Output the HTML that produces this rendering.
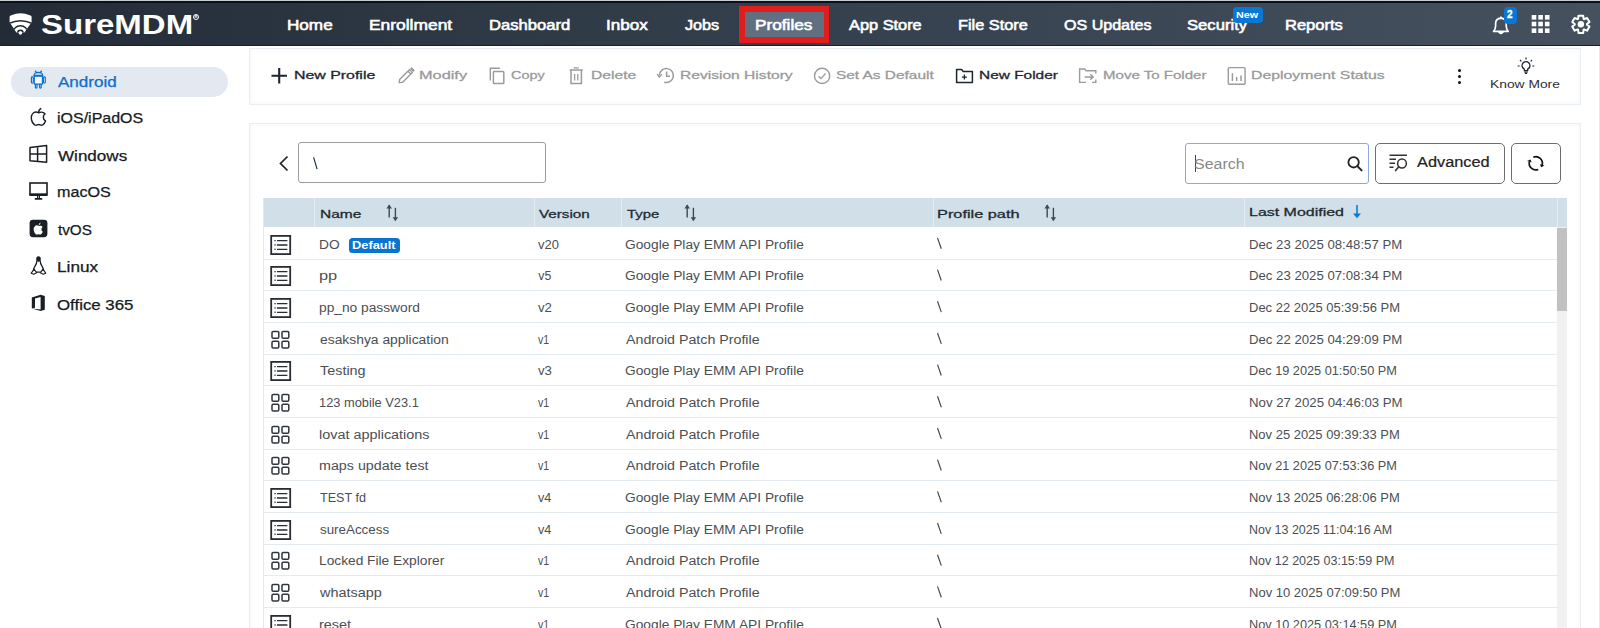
<!DOCTYPE html>
<html><head><meta charset="utf-8"><style>
html,body{margin:0;padding:0;width:1600px;height:628px;overflow:hidden;background:#fff;position:relative;font-family:'Liberation Sans', sans-serif}
.t{position:absolute;white-space:nowrap;line-height:20px;font-family:'Liberation Sans', sans-serif;transform-origin:0 0}
.a{position:absolute}
svg{position:absolute;overflow:visible}
</style></head><body>
<!-- header -->
<div class="a" style="left:0;top:0;width:1600px;height:46px;background:linear-gradient(90deg,#232b36 0%,#29333f 15%,#34404d 50%,#3e4a58 80%,#45515f 100%)"></div>
<div class="a" style="left:0;top:0;width:1600px;height:1px;background:#c9ccd0"></div>
<div class="a" style="left:0;top:1px;width:1600px;height:1.5px;background:#07121c"></div>
<div class="a" style="left:0;top:45px;width:1600px;height:1px;background:#15222e"></div>
<svg style="left:0;top:0" width="40" height="46" viewBox="0 0 40 46">
  <defs><clipPath id="lg"><path d="M9.6,16.4 Q10,15.6 11.4,15.2 Q20.6,11.4 29.8,15.2 Q31.2,15.6 31.6,16.4 L31.6,22.2 L24.4,32.4 L16.4,32.4 L9.6,22.2 Z"/></clipPath></defs>
  <g clip-path="url(#lg)">
    <rect x="0" y="0" width="40" height="46" fill="#fff"/>
    <path d="M8,23.9 Q20.6,17.6 33.2,23.9" stroke="#232b36" stroke-width="1.5" fill="none"/>
    <circle cx="20.4" cy="33.0" r="7.3" stroke="#232b36" stroke-width="1.5" fill="none"/>
    <circle cx="20.4" cy="33.0" r="2.6" stroke="#232b36" stroke-width="1.7" fill="#fff"/>
  </g>
  <circle cx="20.4" cy="33.0" r="1.7" fill="#fff"/>
</svg>
<div class="a" style="left:193px;top:14px;width:6px;height:6px;border-radius:50%;border:1px solid #fff;box-sizing:border-box;font-size:4px;color:#fff;line-height:4px;text-align:center;font-family:'Liberation Sans';font-weight:700">R</div>
<div class="a" style="left:739px;top:6px;width:90px;height:36.5px;background:#e11d1d"></div>
<div class="a" style="left:745px;top:12px;width:79px;height:25px;background:#607080"></div>
<div class="a" style="left:1233px;top:7px;width:30px;height:16px;background:#0a77d5;border-radius:4px;z-index:5"></div>
<!-- bell -->
<svg style="left:1488px;top:12px" width="26" height="26" viewBox="0 0 26 26">
  <path d="M5.6,19.4 Q7.4,17.6 7.6,14 L7.6,11.2 Q7.8,6.6 12.9,6.2 Q18,6.6 18.2,11.2 L18.2,14 Q18.4,17.6 20.2,19.4 Z" stroke="#fff" stroke-width="1.7" fill="none" stroke-linejoin="round"/>
  <path d="M12.9,4.4 L12.9,6.2" stroke="#fff" stroke-width="1.6"/>
  <path d="M11.2,20.6 Q12.9,22.6 14.6,20.6 Z" stroke="#fff" stroke-width="1.4" fill="#fff"/>
</svg>
<div class="a" style="left:1504px;top:7px;width:12.5px;height:16.5px;background:#0a77d5;border-radius:4px"></div>
<!-- grid -->
<svg style="left:1531px;top:15px" width="20" height="20" viewBox="0 0 20 20">
  <g fill="#fff">
  <rect x="0.7" y="0" width="4.6" height="4.6"/><rect x="7.3" y="0" width="4.6" height="4.6"/><rect x="13.9" y="0" width="4.6" height="4.6"/>
  <rect x="0.7" y="6.7" width="4.6" height="4.6"/><rect x="7.3" y="6.7" width="4.6" height="4.6"/><rect x="13.9" y="6.7" width="4.6" height="4.6"/>
  <rect x="0.7" y="13.4" width="4.6" height="4.6"/><rect x="7.3" y="13.4" width="4.6" height="4.6"/><rect x="13.9" y="13.4" width="4.6" height="4.6"/>
  </g>
</svg>
<!-- gear -->
<svg style="left:1568px;top:11px" width="26" height="26" viewBox="0 0 26 26">
  <g transform="translate(12.85,13.3)">
  <path d="M-2.76,-5.44 L-2.37,-8.58 L2.37,-8.58 L2.76,-5.44 L3.33,-5.11 L6.24,-6.34 L8.62,-2.23 L6.09,-0.33 L6.09,0.33 L8.62,2.23 L6.24,6.34 L3.33,5.11 L2.76,5.44 L2.37,8.58 L-2.37,8.58 L-2.76,5.44 L-3.33,5.11 L-6.24,6.34 L-8.62,2.23 L-6.09,0.33 L-6.09,-0.33 L-8.62,-2.23 L-6.24,-6.34 L-3.33,-5.11 Z" stroke="#fff" stroke-width="2" fill="none" stroke-linejoin="round"/><circle r="3.2" fill="#fff"/>
  </g>
</svg>
<!-- sidebar -->
<div class="a" style="left:11px;top:66.5px;width:217px;height:30.5px;background:#e2e9f0;border-radius:16px"></div>
<!-- cards -->
<div class="a" style="left:249px;top:48px;width:1330px;height:54.5px;border:1px solid #e9eef2;background:#fff;box-shadow:inset 0 0 5px rgba(40,60,80,0.05)"></div>
<div class="a" style="left:249px;top:123px;width:1330px;height:520px;border:1px solid #e9eef2;background:#fff;box-shadow:inset 0 0 5px rgba(40,60,80,0.05)"></div>
<div class="a" style="left:1598.5px;top:46px;width:1px;height:582px;background:#e6ebf0"></div>
<!-- path input -->
<div class="a" style="left:298px;top:142px;width:248px;height:41px;border:1px solid #9c9c9c;border-radius:3px;box-sizing:border-box"></div>
<svg style="left:276px;top:153px" width="16" height="22" viewBox="0 0 16 22">
  <path d="M11.5,3.5 L4.5,10.5 L11.5,17.5" stroke="#222" stroke-width="1.7" fill="none"/>
</svg>
<!-- search -->
<div class="a" style="left:1185px;top:142.5px;width:184px;height:41px;border:1px solid #8aaadf;border-radius:3px;box-sizing:border-box"></div>
<div class="a" style="left:1195px;top:155px;width:1px;height:17px;background:#444"></div>
<svg style="left:1345px;top:154px" width="20" height="20" viewBox="0 0 20 20">
  <circle cx="8.6" cy="8.3" r="5.2" stroke="#222" stroke-width="1.8" fill="none"/>
  <path d="M12.4,12.1 L16.6,16.4" stroke="#222" stroke-width="2" stroke-linecap="round"/>
</svg>
<div class="a" style="left:1375px;top:143px;width:130px;height:40.5px;border:1px solid #6d6d6d;border-radius:5px;box-sizing:border-box"></div>
<svg style="left:1387px;top:152px" width="24" height="22" viewBox="0 0 24 22">
  <path d="M2.5,3.2 L20,3.2 M2.5,7.2 L9,7.2 M2.5,11.2 L8,11.2 M2.5,15.2 L6.5,15.2" stroke="#333" stroke-width="1.4"/>
  <circle cx="15" cy="11.5" r="4.4" stroke="#333" stroke-width="1.5" fill="#fff"/>
  <path d="M11.8,14.8 L8.6,18.6" stroke="#333" stroke-width="1.6" stroke-linecap="round"/>
</svg>
<div class="a" style="left:1511px;top:142.5px;width:50px;height:41px;border:1px solid #6d6d6d;border-radius:5px;box-sizing:border-box"></div>
<svg style="left:1524px;top:152px" width="24" height="24" viewBox="0 0 24 24">
  <path d="M9.33,5.18 A6.6,6.6 0 0 1 18.14,13.12" stroke="#111" stroke-width="1.7" fill="none"/>
  <path d="M14.27,17.42 A6.6,6.6 0 0 1 5.46,9.48" stroke="#111" stroke-width="1.7" fill="none"/>
  <path d="M20.53,13.48 L15.88,12.32 L17.14,15.18 Z" fill="#111"/>
  <path d="M3.07,9.12 L7.72,10.28 L6.46,7.42 Z" fill="#111"/>
</svg>
<!-- table header -->
<div class="a" style="left:264px;top:198px;width:1302.5px;height:29px;background:#d1dfe8"></div>
<div class="a" style="left:314px;top:198px;width:1px;height:29px;background:#e4ecf1"></div>
<div class="a" style="left:534px;top:198px;width:1px;height:29px;background:#e4ecf1"></div>
<div class="a" style="left:621px;top:198px;width:1px;height:29px;background:#e4ecf1"></div>
<div class="a" style="left:933px;top:198px;width:1px;height:29px;background:#e4ecf1"></div>
<div class="a" style="left:1244px;top:198px;width:1px;height:29px;background:#e4ecf1"></div>
<div class="a" style="left:1556.5px;top:198px;width:1px;height:29px;background:#e4ecf1"></div>
<div class="a" style="left:263px;top:198px;width:1px;height:430px;background:#e3e9ee"></div>
<!-- scrollbar -->
<div class="a" style="left:1557px;top:227px;width:9.5px;height:401px;background:#f1f1f1"></div>
<div class="a" style="left:1557px;top:228px;width:9.5px;height:83px;background:#c1c1c1"></div>
<svg style="left:385.5px;top:203.6px" width="14" height="18" viewBox="0 0 14 18">
  <path d="M3.2,1 L3.2,13.4" stroke="#3b4b58" stroke-width="1.4"/><path d="M0.4,4.4 L3.2,0.6 L6,4.4 Z" fill="#3b4b58"/>
  <path d="M9.4,3.8 L9.4,16.6" stroke="#3b4b58" stroke-width="1.4"/><path d="M6.6,13.2 L9.4,17 L12.2,13.2 Z" fill="#3b4b58"/>
</svg>
<svg style="left:684px;top:203.6px" width="14" height="18" viewBox="0 0 14 18">
  <path d="M3.2,1 L3.2,13.4" stroke="#3b4b58" stroke-width="1.4"/><path d="M0.4,4.4 L3.2,0.6 L6,4.4 Z" fill="#3b4b58"/>
  <path d="M9.4,3.8 L9.4,16.6" stroke="#3b4b58" stroke-width="1.4"/><path d="M6.6,13.2 L9.4,17 L12.2,13.2 Z" fill="#3b4b58"/>
</svg>
<svg style="left:1044.4px;top:203.6px" width="14" height="18" viewBox="0 0 14 18">
  <path d="M3.2,1 L3.2,13.4" stroke="#3b4b58" stroke-width="1.4"/><path d="M0.4,4.4 L3.2,0.6 L6,4.4 Z" fill="#3b4b58"/>
  <path d="M9.4,3.8 L9.4,16.6" stroke="#3b4b58" stroke-width="1.4"/><path d="M6.6,13.2 L9.4,17 L12.2,13.2 Z" fill="#3b4b58"/>
</svg>
<svg style="left:1351px;top:204px" width="12" height="16" viewBox="0 0 12 16">
  <path d="M6,1 L6,12" stroke="#0e7ad6" stroke-width="1.6"/><path d="M2,9.6 L6,14.2 L10,9.6 Z" fill="#0e7ad6"/></svg>
<div class="a" style="left:264px;top:259px;width:1293px;height:1px;background:#e4ebf1"></div>
<div class="a" style="left:264px;top:290px;width:1293px;height:1px;background:#e4ebf1"></div>
<div class="a" style="left:264px;top:322px;width:1293px;height:1px;background:#e4ebf1"></div>
<div class="a" style="left:264px;top:354px;width:1293px;height:1px;background:#e4ebf1"></div>
<div class="a" style="left:264px;top:385px;width:1293px;height:1px;background:#e4ebf1"></div>
<div class="a" style="left:264px;top:417px;width:1293px;height:1px;background:#e4ebf1"></div>
<div class="a" style="left:264px;top:449px;width:1293px;height:1px;background:#e4ebf1"></div>
<div class="a" style="left:264px;top:480px;width:1293px;height:1px;background:#e4ebf1"></div>
<div class="a" style="left:264px;top:512px;width:1293px;height:1px;background:#e4ebf1"></div>
<div class="a" style="left:264px;top:544px;width:1293px;height:1px;background:#e4ebf1"></div>
<div class="a" style="left:264px;top:575px;width:1293px;height:1px;background:#e4ebf1"></div>
<div class="a" style="left:264px;top:607px;width:1293px;height:1px;background:#e4ebf1"></div>
<div class="a" style="left:264px;top:639px;width:1293px;height:1px;background:#e4ebf1"></div>
<svg style="left:269px;top:233.60px" width="24" height="22" viewBox="0 0 24 22">
  <rect x="2.2" y="1.9" width="19" height="18.2" stroke="#272d33" stroke-width="1.8" fill="#fff"/>
  <g fill="#272d33"><rect x="5.4" y="6" width="1.3" height="1.3"/><rect x="5.4" y="10.3" width="1.3" height="1.3"/><rect x="5.4" y="14.6" width="1.3" height="1.3"/></g>
  <path d="M8,6.7 L18.4,6.7 M8,11 L18.4,11 M8,15.3 L18.4,15.3" stroke="#272d33" stroke-width="1.3"/>
</svg>
<svg style="left:269px;top:265.28px" width="24" height="22" viewBox="0 0 24 22">
  <rect x="2.2" y="1.9" width="19" height="18.2" stroke="#272d33" stroke-width="1.8" fill="#fff"/>
  <g fill="#272d33"><rect x="5.4" y="6" width="1.3" height="1.3"/><rect x="5.4" y="10.3" width="1.3" height="1.3"/><rect x="5.4" y="14.6" width="1.3" height="1.3"/></g>
  <path d="M8,6.7 L18.4,6.7 M8,11 L18.4,11 M8,15.3 L18.4,15.3" stroke="#272d33" stroke-width="1.3"/>
</svg>
<svg style="left:269px;top:296.96px" width="24" height="22" viewBox="0 0 24 22">
  <rect x="2.2" y="1.9" width="19" height="18.2" stroke="#272d33" stroke-width="1.8" fill="#fff"/>
  <g fill="#272d33"><rect x="5.4" y="6" width="1.3" height="1.3"/><rect x="5.4" y="10.3" width="1.3" height="1.3"/><rect x="5.4" y="14.6" width="1.3" height="1.3"/></g>
  <path d="M8,6.7 L18.4,6.7 M8,11 L18.4,11 M8,15.3 L18.4,15.3" stroke="#272d33" stroke-width="1.3"/>
</svg>
<svg style="left:269px;top:328.64px" width="24" height="22" viewBox="0 0 24 22">
  <g stroke="#30363c" stroke-width="1.5" fill="none">
  <rect x="3" y="2.4" width="6.8" height="6.8" rx="1.2"/><rect x="13" y="2.4" width="6.8" height="6.8" rx="1.2"/>
  <rect x="3" y="12.2" width="6.8" height="6.8" rx="1.2"/><rect x="13" y="12.2" width="6.8" height="6.8" rx="1.2"/>
  </g></svg>
<svg style="left:269px;top:360.32px" width="24" height="22" viewBox="0 0 24 22">
  <rect x="2.2" y="1.9" width="19" height="18.2" stroke="#272d33" stroke-width="1.8" fill="#fff"/>
  <g fill="#272d33"><rect x="5.4" y="6" width="1.3" height="1.3"/><rect x="5.4" y="10.3" width="1.3" height="1.3"/><rect x="5.4" y="14.6" width="1.3" height="1.3"/></g>
  <path d="M8,6.7 L18.4,6.7 M8,11 L18.4,11 M8,15.3 L18.4,15.3" stroke="#272d33" stroke-width="1.3"/>
</svg>
<svg style="left:269px;top:392.00px" width="24" height="22" viewBox="0 0 24 22">
  <g stroke="#30363c" stroke-width="1.5" fill="none">
  <rect x="3" y="2.4" width="6.8" height="6.8" rx="1.2"/><rect x="13" y="2.4" width="6.8" height="6.8" rx="1.2"/>
  <rect x="3" y="12.2" width="6.8" height="6.8" rx="1.2"/><rect x="13" y="12.2" width="6.8" height="6.8" rx="1.2"/>
  </g></svg>
<svg style="left:269px;top:423.68px" width="24" height="22" viewBox="0 0 24 22">
  <g stroke="#30363c" stroke-width="1.5" fill="none">
  <rect x="3" y="2.4" width="6.8" height="6.8" rx="1.2"/><rect x="13" y="2.4" width="6.8" height="6.8" rx="1.2"/>
  <rect x="3" y="12.2" width="6.8" height="6.8" rx="1.2"/><rect x="13" y="12.2" width="6.8" height="6.8" rx="1.2"/>
  </g></svg>
<svg style="left:269px;top:455.36px" width="24" height="22" viewBox="0 0 24 22">
  <g stroke="#30363c" stroke-width="1.5" fill="none">
  <rect x="3" y="2.4" width="6.8" height="6.8" rx="1.2"/><rect x="13" y="2.4" width="6.8" height="6.8" rx="1.2"/>
  <rect x="3" y="12.2" width="6.8" height="6.8" rx="1.2"/><rect x="13" y="12.2" width="6.8" height="6.8" rx="1.2"/>
  </g></svg>
<svg style="left:269px;top:487.04px" width="24" height="22" viewBox="0 0 24 22">
  <rect x="2.2" y="1.9" width="19" height="18.2" stroke="#272d33" stroke-width="1.8" fill="#fff"/>
  <g fill="#272d33"><rect x="5.4" y="6" width="1.3" height="1.3"/><rect x="5.4" y="10.3" width="1.3" height="1.3"/><rect x="5.4" y="14.6" width="1.3" height="1.3"/></g>
  <path d="M8,6.7 L18.4,6.7 M8,11 L18.4,11 M8,15.3 L18.4,15.3" stroke="#272d33" stroke-width="1.3"/>
</svg>
<svg style="left:269px;top:518.72px" width="24" height="22" viewBox="0 0 24 22">
  <rect x="2.2" y="1.9" width="19" height="18.2" stroke="#272d33" stroke-width="1.8" fill="#fff"/>
  <g fill="#272d33"><rect x="5.4" y="6" width="1.3" height="1.3"/><rect x="5.4" y="10.3" width="1.3" height="1.3"/><rect x="5.4" y="14.6" width="1.3" height="1.3"/></g>
  <path d="M8,6.7 L18.4,6.7 M8,11 L18.4,11 M8,15.3 L18.4,15.3" stroke="#272d33" stroke-width="1.3"/>
</svg>
<svg style="left:269px;top:550.40px" width="24" height="22" viewBox="0 0 24 22">
  <g stroke="#30363c" stroke-width="1.5" fill="none">
  <rect x="3" y="2.4" width="6.8" height="6.8" rx="1.2"/><rect x="13" y="2.4" width="6.8" height="6.8" rx="1.2"/>
  <rect x="3" y="12.2" width="6.8" height="6.8" rx="1.2"/><rect x="13" y="12.2" width="6.8" height="6.8" rx="1.2"/>
  </g></svg>
<svg style="left:269px;top:582.08px" width="24" height="22" viewBox="0 0 24 22">
  <g stroke="#30363c" stroke-width="1.5" fill="none">
  <rect x="3" y="2.4" width="6.8" height="6.8" rx="1.2"/><rect x="13" y="2.4" width="6.8" height="6.8" rx="1.2"/>
  <rect x="3" y="12.2" width="6.8" height="6.8" rx="1.2"/><rect x="13" y="12.2" width="6.8" height="6.8" rx="1.2"/>
  </g></svg>
<svg style="left:269px;top:613.76px" width="24" height="22" viewBox="0 0 24 22">
  <rect x="2.2" y="1.9" width="19" height="18.2" stroke="#272d33" stroke-width="1.8" fill="#fff"/>
  <g fill="#272d33"><rect x="5.4" y="6" width="1.3" height="1.3"/><rect x="5.4" y="10.3" width="1.3" height="1.3"/><rect x="5.4" y="14.6" width="1.3" height="1.3"/></g>
  <path d="M8,6.7 L18.4,6.7 M8,11 L18.4,11 M8,15.3 L18.4,15.3" stroke="#272d33" stroke-width="1.3"/>
</svg>
<div class="a" style="left:348.8px;top:237.9px;width:51.2px;height:14.7px;background:#0b74d1;border-radius:3.5px"></div>
<svg style="left:268px;top:65px" width="22" height="22" viewBox="0 0 22 22">
  <path d="M11.2,3 L11.2,18.5 M3.5,10.8 L19,10.8" stroke="#1c2530" stroke-width="2.1"/></svg>
<svg style="left:395px;top:65px" width="22" height="22" viewBox="0 0 22 22">
  <path d="M4.2,17.6 L4.6,14.6 L14.6,4.6 L17.4,7.4 L7.4,17.4 Z M13,6.2 L15.8,9" stroke="#9b9b9b" stroke-width="1.4" fill="none" stroke-linejoin="round"/>
  <path d="M15.6,3.6 L16.6,2.6 L19.4,5.4 L18.4,6.4 Z" fill="#9b9b9b" stroke="#9b9b9b" stroke-width="1"/></svg>
<svg style="left:487px;top:65px" width="22" height="22" viewBox="0 0 22 22">
  <path d="M3.3,15.6 L3.3,3.2 L12.8,3.2" stroke="#9b9b9b" stroke-width="1.4" fill="none"/>
  <rect x="6.4" y="6.6" width="10.4" height="12" rx="0.8" stroke="#9b9b9b" stroke-width="1.5" fill="none"/></svg>
<svg style="left:566px;top:65px" width="22" height="22" viewBox="0 0 22 22">
  <path d="M3.6,5 L16.8,5 M7.6,2.9 L12.8,2.9" stroke="#9b9b9b" stroke-width="1.4"/>
  <path d="M5,5 L5,18.4 L15.4,18.4 L15.4,5" stroke="#9b9b9b" stroke-width="1.5" fill="none"/>
  <path d="M8.6,9 L8.6,15.4 M11.8,9 L11.8,15.4" stroke="#9b9b9b" stroke-width="1.3"/></svg>
<svg style="left:655px;top:65px" width="22" height="22" viewBox="0 0 22 22">
  <path d="M4.4,10.2 A7,7 0 1 1 9.2,17.2" stroke="#9b9b9b" stroke-width="1.5" fill="none"/>
  <path d="M2.2,9 L4.4,12.2 L6.8,9.2" stroke="#9b9b9b" stroke-width="1.4" fill="none"/>
  <path d="M11.6,6.4 L11.6,11.2 L15,11.2" stroke="#9b9b9b" stroke-width="1.5" fill="none"/></svg>
<svg style="left:811px;top:65px" width="22" height="22" viewBox="0 0 22 22">
  <circle cx="11.1" cy="10.9" r="7.6" stroke="#9b9b9b" stroke-width="1.4" fill="none"/>
  <path d="M7.6,11.2 L10,13.6 L14.6,8.4" stroke="#9b9b9b" stroke-width="1.4" fill="none"/></svg>
<svg style="left:953px;top:65px" width="22" height="22" viewBox="0 0 22 22">
  <path d="M3.6,4.6 L8.6,4.6 L10.2,6.4 L19.4,6.4 L19.4,17.4 L3.6,17.4 Z" stroke="#1c2530" stroke-width="1.5" fill="none" stroke-linejoin="round"/>
  <path d="M11.4,9.6 L11.4,14.6 M8.9,12.1 L13.9,12.1" stroke="#1c2530" stroke-width="1.3"/></svg>
<svg style="left:1076px;top:65px" width="24" height="22" viewBox="0 0 24 22">
  <path d="M10,17.4 L3.6,17.4 L3.6,4 L8.6,4 L10.2,5.8 L19.8,5.8 L19.8,8.6 M19.8,14.6 L19.8,17.4 L16,17.4" stroke="#9b9b9b" stroke-width="1.4" fill="none"/>
  <path d="M8.6,12 L17,12 M14.2,9.2 L17.2,12 L14.2,14.8" stroke="#9b9b9b" stroke-width="1.4" fill="none"/></svg>
<svg style="left:1225px;top:65px" width="24" height="22" viewBox="0 0 24 22">
  <rect x="3.3" y="2.6" width="16.8" height="16.6" rx="1" stroke="#9b9b9b" stroke-width="1.4" fill="none"/>
  <path d="M7.4,8.2 L7.4,16 M11.7,12 L11.7,16 M16,10.6 L16,16" stroke="#9b9b9b" stroke-width="1.5"/></svg>
<div class="a" style="left:1457.9px;top:69.2px;width:3.2px;height:3.2px;border-radius:50%;background:#111"></div>
<div class="a" style="left:1457.9px;top:74.9px;width:3.2px;height:3.2px;border-radius:50%;background:#111"></div>
<div class="a" style="left:1457.9px;top:80.7px;width:3.2px;height:3.2px;border-radius:50%;background:#111"></div>
<svg style="left:1515px;top:55px" width="22" height="22" viewBox="0 0 22 22">
  <path d="M9.4,15.8 L9.4,14.8 Q9.4,14.1 8.1,13.2 A3.9,3.9 0 1 1 13.9,13.2 Q12.6,14.1 12.6,14.8 L12.6,15.8 Z" stroke="#1e242a" stroke-width="1.4" fill="none" stroke-linejoin="round"/>
  <path d="M9.4,17.2 L12.6,17.2 M9.9,18.5 L12.1,18.5" stroke="#1e242a" stroke-width="1.1"/>
  <path d="M11,2.6 L11,4.6 M5,5 L6.3,6.3 M17,5 L15.7,6.3 M2.6,11 L4.6,11 M17.4,11 L19.4,11" stroke="#1e242a" stroke-width="1.2"/></svg>
<svg style="left:28px;top:68px" width="22" height="24" viewBox="0 0 22 24">
  <g stroke="#0c6fcb" stroke-width="1.15" fill="none" stroke-linejoin="round">
  <path d="M5.9,7.6 Q6.2,4.4 10.35,4.3 Q14.5,4.4 14.8,7.6 Z" fill="#0c6fcb" fill-opacity="0.25"/>
  <rect x="6.3" y="8.1" width="8.1" height="8" fill="#fff" fill-opacity="0.6"/>
  <rect x="3.4" y="8.8" width="1.9" height="6.4" rx="0.9"/>
  <rect x="15.4" y="8.8" width="1.9" height="6.4" rx="0.9"/>
  <path d="M7.4,16.1 L7.4,19.6 Q8.2,20.6 9,19.6 L9,16.1 M11.6,16.1 L11.6,19.6 Q12.4,20.6 13.2,19.6 L13.2,16.1"/>
  <path d="M7.6,3.4 L8.6,5 M13.2,3.4 L12.2,5"/>
  </g>
  <circle cx="7.5" cy="3.3" r="0.8" fill="#0c6fcb"/><circle cx="13.3" cy="3.3" r="0.8" fill="#0c6fcb"/></svg>
<svg style="left:28px;top:106px" width="22" height="22" viewBox="0 0 22 22"><g transform="translate(10.25,10.8) scale(1.1) translate(-10.6,-11.25)">
  <path d="M11,7.6 Q8.4,6.2 6.4,7.6 Q3.8,9.6 4.4,13.6 Q5.2,17.4 7.4,18.6 Q8.6,19.2 9.8,18.6 Q11,18 12.2,18.6 Q13.4,19.2 14.6,18.6 Q16.4,17.4 17.2,15 Q15.2,13.8 15.2,11.6 Q15.2,9.6 16.8,8.6 Q15.4,6.8 13.2,7 Q12,7.2 11,7.6 Z" stroke="#1a1f25" stroke-width="1.3" fill="none" stroke-linejoin="round"/>
  <path d="M11,7.2 Q11,4.6 13.4,3.6" stroke="#1a1f25" stroke-width="1.3" fill="none"/></g></svg>
<svg style="left:28px;top:144px" width="22" height="22" viewBox="0 0 22 22">
  <path d="M2,3.4 L18.6,1.6 L18.6,18.2 L2,16.8 Z M2,10.1 L18.6,10.1 M9.6,2.6 L9.6,17.5" stroke="#1a1f25" stroke-width="1.5" fill="none" stroke-linejoin="round"/></svg>
<svg style="left:28px;top:180px" width="22" height="22" viewBox="0 0 22 22">
  <rect x="2" y="3" width="17" height="11.6" stroke="#1a1f25" stroke-width="1.6" fill="none"/>
  <rect x="1.6" y="13.4" width="17.8" height="2.6" fill="#1a1f25"/>
  <path d="M9.6,16 L9.6,18.4 M11.4,16 L11.4,18.4" stroke="#1a1f25" stroke-width="1.2"/>
  <rect x="6.6" y="18" width="7.8" height="1.8" rx="0.9" fill="#1a1f25"/></svg>
<svg style="left:28px;top:218px" width="22" height="22" viewBox="0 0 22 22">
  <rect x="1.6" y="1.8" width="17.8" height="17.4" rx="3.4" fill="#1a1f25"/>
  <path d="M10.6,7.8 Q8.6,6.8 7.2,7.8 Q5.2,9.4 5.8,12.6 Q6.4,15.4 8,16.4 Q9,16.8 10.4,16.2 Q11.8,16.8 12.8,16.4 Q14.2,15.4 14.8,13.8 Q13.4,12.8 13.4,11.2 Q13.4,9.8 14.6,9 Q13.6,7.6 12,7.8 Q11.2,8 10.6,7.8 Z M10.6,7.2 Q10.8,5.2 12.6,4.6 Q12.6,6.6 10.6,7.2 Z" fill="#fff"/></svg>
<svg style="left:28px;top:254px" width="22" height="22" viewBox="0 0 22 22">
  <path d="M8.9,6.6 Q8.8,9.6 7,12.2 Q5.2,14.8 5.4,18.2 L15.6,18.2 Q15.8,14.8 14,12.2 Q12.2,9.6 12.1,6.6" stroke="#1a1f25" stroke-width="1.3" fill="none" stroke-linejoin="round"/>
  <ellipse cx="10.5" cy="5" rx="2.3" ry="2.7" fill="#1a1f25"/>
  <path d="M3.2,19.2 L6.2,15.2 L8.6,18.8 L5.8,20.2 Z M17.8,19.2 L14.8,15.2 L12.4,18.8 L15.2,20.2 Z" stroke="#1a1f25" stroke-width="1.1" fill="#fff" stroke-linejoin="round"/></svg>
<svg style="left:28px;top:292px" width="22" height="22" viewBox="0 0 22 22">
  <path d="M3.8,5.6 L12.6,2.8 L16.8,4 L16.8,17.8 L12.6,19 L3.8,16.6 L12.6,17.6 L12.6,5 L7,6.4 L7,15.8 L3.8,16.6 Z" fill="#1a1f25"/></svg>
<svg style="left:0;top:0" width="1600" height="628" viewBox="0 0 1600 628">
<path d="M313.6,157.4 L317.1,169.2" stroke="#1d3148" stroke-width="1.2"/>
<path d="M937.5,237.90 L941.3,248.80" stroke="#40454a" stroke-width="1.15"/>
<path d="M937.5,269.58 L941.3,280.48" stroke="#40454a" stroke-width="1.15"/>
<path d="M937.5,301.26 L941.3,312.16" stroke="#40454a" stroke-width="1.15"/>
<path d="M937.5,332.94 L941.3,343.84" stroke="#40454a" stroke-width="1.15"/>
<path d="M937.5,364.62 L941.3,375.52" stroke="#40454a" stroke-width="1.15"/>
<path d="M937.5,396.30 L941.3,407.20" stroke="#40454a" stroke-width="1.15"/>
<path d="M937.5,427.98 L941.3,438.88" stroke="#40454a" stroke-width="1.15"/>
<path d="M937.5,459.66 L941.3,470.56" stroke="#40454a" stroke-width="1.15"/>
<path d="M937.5,491.34 L941.3,502.24" stroke="#40454a" stroke-width="1.15"/>
<path d="M937.5,523.02 L941.3,533.92" stroke="#40454a" stroke-width="1.15"/>
<path d="M937.5,554.70 L941.3,565.60" stroke="#40454a" stroke-width="1.15"/>
<path d="M937.5,586.38 L941.3,597.28" stroke="#40454a" stroke-width="1.15"/>
<path d="M937.5,618.06 L941.3,628.96" stroke="#40454a" stroke-width="1.15"/>
</svg>
<div class="t" style="left:41.14px;top:14.10px;font-size:28.5px;font-weight:700;color:#fff;transform:scaleX(1.1574)">SureMDM</div>
<div class="t" style="left:287.48px;top:15.20px;font-size:14px;font-weight:400;color:#fff;transform:scaleX(1.2222);-webkit-text-stroke:0.55px #fff">Home</div>
<div class="t" style="left:368.76px;top:15.20px;font-size:14px;font-weight:400;color:#fff;transform:scaleX(1.2424);-webkit-text-stroke:0.55px #fff">Enrollment</div>
<div class="t" style="left:488.81px;top:15.20px;font-size:14px;font-weight:400;color:#fff;transform:scaleX(1.1851);-webkit-text-stroke:0.55px #fff">Dashboard</div>
<div class="t" style="left:606.38px;top:15.20px;font-size:14px;font-weight:400;color:#fff;transform:scaleX(1.2212);-webkit-text-stroke:0.55px #fff">Inbox</div>
<div class="t" style="left:685.00px;top:15.20px;font-size:14px;font-weight:400;color:#fff;transform:scaleX(1.1552);-webkit-text-stroke:0.55px #fff">Jobs</div>
<div class="t" style="left:755.17px;top:15.20px;font-size:14px;font-weight:400;color:#fff;transform:scaleX(1.2289);-webkit-text-stroke:0.55px #fff">Profiles</div>
<div class="t" style="left:849.00px;top:15.20px;font-size:14px;font-weight:400;color:#fff;transform:scaleX(1.1677);-webkit-text-stroke:0.55px #fff">App Store</div>
<div class="t" style="left:958.23px;top:15.20px;font-size:14px;font-weight:400;color:#fff;transform:scaleX(1.1655);-webkit-text-stroke:0.55px #fff">File Store</div>
<div class="t" style="left:1063.85px;top:15.20px;font-size:14px;font-weight:400;color:#fff;transform:scaleX(1.1467);-webkit-text-stroke:0.55px #fff">OS Updates</div>
<div class="t" style="left:1187.21px;top:15.20px;font-size:14px;font-weight:400;color:#fff;transform:scaleX(1.1880);-webkit-text-stroke:0.55px #fff">Security</div>
<div class="t" style="left:1284.62px;top:15.20px;font-size:14px;font-weight:400;color:#fff;transform:scaleX(1.1792);-webkit-text-stroke:0.55px #fff">Reports</div>
<div class="t" style="left:1235.87px;top:5.00px;font-size:9.5px;font-weight:700;color:#fff;transform:scaleX(1.1316);z-index:6">New</div>
<div class="t" style="left:1507.00px;top:4.60px;font-size:10px;font-weight:700;color:#fff;-webkit-text-stroke:0.3px #fff">2</div>
<div class="t" style="left:57.80px;top:71.60px;font-size:14px;font-weight:400;color:#0c6fcb;transform:scaleX(1.2167);-webkit-text-stroke:0.25px #0c6fcb">Android</div>
<div class="t" style="left:56.56px;top:108.20px;font-size:14px;font-weight:400;color:#161c22;transform:scaleX(1.1419);-webkit-text-stroke:0.25px #161c22">iOS/iPadOS</div>
<div class="t" style="left:58.20px;top:146.00px;font-size:14px;font-weight:400;color:#161c22;transform:scaleX(1.2179);-webkit-text-stroke:0.25px #161c22">Windows</div>
<div class="t" style="left:57.05px;top:182.40px;font-size:14px;font-weight:400;color:#161c22;transform:scaleX(1.1511);-webkit-text-stroke:0.25px #161c22">macOS</div>
<div class="t" style="left:58.20px;top:219.80px;font-size:14px;font-weight:400;color:#161c22;transform:scaleX(1.0903);-webkit-text-stroke:0.25px #161c22">tvOS</div>
<div class="t" style="left:56.97px;top:256.90px;font-size:14px;font-weight:400;color:#161c22;transform:scaleX(1.2281);-webkit-text-stroke:0.25px #161c22">Linux</div>
<div class="t" style="left:57.00px;top:294.50px;font-size:14px;font-weight:400;color:#161c22;transform:scaleX(1.2032);-webkit-text-stroke:0.25px #161c22">Office 365</div>
<div class="t" style="left:294.15px;top:65.20px;font-size:11.8px;font-weight:400;color:#1c2530;transform:scaleX(1.3475);-webkit-text-stroke:0.3px #1c2530">New Profile</div>
<div class="t" style="left:418.62px;top:65.20px;font-size:11.8px;font-weight:400;color:#9a9a9a;transform:scaleX(1.3824);-webkit-text-stroke:0.3px #9a9a9a">Modify</div>
<div class="t" style="left:511.28px;top:65.20px;font-size:11.8px;font-weight:400;color:#9a9a9a;transform:scaleX(1.2222);-webkit-text-stroke:0.3px #9a9a9a">Copy</div>
<div class="t" style="left:590.68px;top:65.20px;font-size:11.8px;font-weight:400;color:#9a9a9a;transform:scaleX(1.3242);-webkit-text-stroke:0.3px #9a9a9a">Delete</div>
<div class="t" style="left:679.68px;top:65.20px;font-size:11.8px;font-weight:400;color:#9a9a9a;transform:scaleX(1.3214);-webkit-text-stroke:0.3px #9a9a9a">Revision History</div>
<div class="t" style="left:836.19px;top:65.20px;font-size:11.8px;font-weight:400;color:#9a9a9a;transform:scaleX(1.3068);-webkit-text-stroke:0.3px #9a9a9a">Set As Default</div>
<div class="t" style="left:979.19px;top:65.20px;font-size:11.8px;font-weight:400;color:#1c2530;transform:scaleX(1.3085);-webkit-text-stroke:0.3px #1c2530">New Folder</div>
<div class="t" style="left:1102.72px;top:65.20px;font-size:11.8px;font-weight:400;color:#9a9a9a;transform:scaleX(1.2750);-webkit-text-stroke:0.3px #9a9a9a">Move To Folder</div>
<div class="t" style="left:1251.16px;top:65.20px;font-size:11.8px;font-weight:400;color:#9a9a9a;transform:scaleX(1.3418);-webkit-text-stroke:0.3px #9a9a9a">Deployment Status</div>
<div class="t" style="left:1490.30px;top:74.30px;font-size:11.5px;font-weight:400;color:#2a2f35;transform:scaleX(1.2018)">Know More</div>
<div class="t" style="left:1193.86px;top:153.60px;font-size:14px;font-weight:400;color:#8a8a8a;transform:scaleX(1.1395)">Search</div>
<div class="t" style="left:1417.00px;top:152.40px;font-size:14px;font-weight:400;color:#222;transform:scaleX(1.1677);-webkit-text-stroke:0.2px #222">Advanced</div>
<div class="t" style="left:319.59px;top:203.60px;font-size:11.8px;font-weight:400;color:#1e2a33;transform:scaleX(1.3133);-webkit-text-stroke:0.3px #1e2a33">Name</div>
<div class="t" style="left:539.00px;top:203.60px;font-size:11.8px;font-weight:400;color:#1e2a33;transform:scaleX(1.2897);-webkit-text-stroke:0.3px #1e2a33">Version</div>
<div class="t" style="left:626.70px;top:203.60px;font-size:11.8px;font-weight:400;color:#1e2a33;transform:scaleX(1.2640);-webkit-text-stroke:0.3px #1e2a33">Type</div>
<div class="t" style="left:937.42px;top:203.60px;font-size:11.8px;font-weight:400;color:#1e2a33;transform:scaleX(1.3828);-webkit-text-stroke:0.3px #1e2a33">Profile path</div>
<div class="t" style="left:1249.25px;top:202.20px;font-size:11.8px;font-weight:400;color:#1e2a33;transform:scaleX(1.3529);-webkit-text-stroke:0.3px #1e2a33">Last Modified</div>
<div class="t" style="left:318.98px;top:234.50px;font-size:12.3px;font-weight:400;color:#4a4f54;transform:scaleX(1.1176)">DO</div>
<div class="t" style="left:538.30px;top:234.50px;font-size:12.3px;font-weight:400;color:#4a4f54;transform:scaleX(1.0550)">v20</div>
<div class="t" style="left:624.68px;top:234.50px;font-size:12.3px;font-weight:400;color:#4a4f54;transform:scaleX(1.1184)">Google Play EMM API Profile</div>
<div class="t" style="left:1248.73px;top:234.50px;font-size:12.3px;font-weight:400;color:#4a4f54;transform:scaleX(1.0723)">Dec 23 2025 08:48:57 PM</div>
<div class="t" style="left:318.77px;top:266.18px;font-size:12.3px;font-weight:400;color:#4a4f54;transform:scaleX(1.3333)">pp</div>
<div class="t" style="left:538.30px;top:266.18px;font-size:12.3px;font-weight:400;color:#4a4f54">v5</div>
<div class="t" style="left:624.68px;top:266.18px;font-size:12.3px;font-weight:400;color:#4a4f54;transform:scaleX(1.1184)">Google Play EMM API Profile</div>
<div class="t" style="left:1248.73px;top:266.18px;font-size:12.3px;font-weight:400;color:#4a4f54;transform:scaleX(1.0723)">Dec 23 2025 07:08:34 PM</div>
<div class="t" style="left:318.98px;top:297.86px;font-size:12.3px;font-weight:400;color:#4a4f54;transform:scaleX(1.1180)">pp_no password</div>
<div class="t" style="left:538.30px;top:297.86px;font-size:12.3px;font-weight:400;color:#4a4f54;transform:scaleX(1.0734)">v2</div>
<div class="t" style="left:624.68px;top:297.86px;font-size:12.3px;font-weight:400;color:#4a4f54;transform:scaleX(1.1184)">Google Play EMM API Profile</div>
<div class="t" style="left:1248.74px;top:297.86px;font-size:12.3px;font-weight:400;color:#4a4f54;transform:scaleX(1.0567)">Dec 22 2025 05:39:56 PM</div>
<div class="t" style="left:320.10px;top:329.54px;font-size:12.3px;font-weight:400;color:#4a4f54;transform:scaleX(1.1272)">esakshya application</div>
<div class="t" style="left:538.30px;top:329.54px;font-size:12.3px;font-weight:400;color:#4a4f54;transform:scaleX(0.8615)">v1</div>
<div class="t" style="left:625.80px;top:329.54px;font-size:12.3px;font-weight:400;color:#4a4f54;transform:scaleX(1.1565)">Android Patch Profile</div>
<div class="t" style="left:1248.73px;top:329.54px;font-size:12.3px;font-weight:400;color:#4a4f54;transform:scaleX(1.0723)">Dec 22 2025 04:29:09 PM</div>
<div class="t" style="left:320.10px;top:361.22px;font-size:12.3px;font-weight:400;color:#4a4f54;transform:scaleX(1.1711)">Testing</div>
<div class="t" style="left:538.30px;top:361.22px;font-size:12.3px;font-weight:400;color:#4a4f54;transform:scaleX(1.0734)">v3</div>
<div class="t" style="left:624.68px;top:361.22px;font-size:12.3px;font-weight:400;color:#4a4f54;transform:scaleX(1.1184)">Google Play EMM API Profile</div>
<div class="t" style="left:1248.77px;top:361.22px;font-size:12.3px;font-weight:400;color:#4a4f54;transform:scaleX(1.0348)">Dec 19 2025 01:50:50 PM</div>
<div class="t" style="left:319.06px;top:392.90px;font-size:12.3px;font-weight:400;color:#4a4f54;transform:scaleX(1.0426)">123 mobile V23.1</div>
<div class="t" style="left:538.30px;top:392.90px;font-size:12.3px;font-weight:400;color:#4a4f54;transform:scaleX(0.8615)">v1</div>
<div class="t" style="left:625.80px;top:392.90px;font-size:12.3px;font-weight:400;color:#4a4f54;transform:scaleX(1.1565)">Android Patch Profile</div>
<div class="t" style="left:1248.72px;top:392.90px;font-size:12.3px;font-weight:400;color:#4a4f54;transform:scaleX(1.0752)">Nov 27 2025 04:46:03 PM</div>
<div class="t" style="left:318.93px;top:424.58px;font-size:12.3px;font-weight:400;color:#4a4f54;transform:scaleX(1.1720)">lovat applications</div>
<div class="t" style="left:538.30px;top:424.58px;font-size:12.3px;font-weight:400;color:#4a4f54;transform:scaleX(0.8615)">v1</div>
<div class="t" style="left:625.80px;top:424.58px;font-size:12.3px;font-weight:400;color:#4a4f54;transform:scaleX(1.1565)">Android Patch Profile</div>
<div class="t" style="left:1248.75px;top:424.58px;font-size:12.3px;font-weight:400;color:#4a4f54;transform:scaleX(1.0546)">Nov 25 2025 09:39:33 PM</div>
<div class="t" style="left:318.94px;top:456.26px;font-size:12.3px;font-weight:400;color:#4a4f54;transform:scaleX(1.1613)">maps update test</div>
<div class="t" style="left:538.30px;top:456.26px;font-size:12.3px;font-weight:400;color:#4a4f54;transform:scaleX(0.8615)">v1</div>
<div class="t" style="left:625.80px;top:456.26px;font-size:12.3px;font-weight:400;color:#4a4f54;transform:scaleX(1.1565)">Android Patch Profile</div>
<div class="t" style="left:1248.77px;top:456.26px;font-size:12.3px;font-weight:400;color:#4a4f54;transform:scaleX(1.0348)">Nov 21 2025 07:53:36 PM</div>
<div class="t" style="left:320.10px;top:487.94px;font-size:12.3px;font-weight:400;color:#4a4f54;transform:scaleX(1.0227)">TEST fd</div>
<div class="t" style="left:538.30px;top:487.94px;font-size:12.3px;font-weight:400;color:#4a4f54;transform:scaleX(1.0231)">v4</div>
<div class="t" style="left:624.68px;top:487.94px;font-size:12.3px;font-weight:400;color:#4a4f54;transform:scaleX(1.1184)">Google Play EMM API Profile</div>
<div class="t" style="left:1248.75px;top:487.94px;font-size:12.3px;font-weight:400;color:#4a4f54;transform:scaleX(1.0546)">Nov 13 2025 06:28:06 PM</div>
<div class="t" style="left:320.10px;top:519.62px;font-size:12.3px;font-weight:400;color:#4a4f54;transform:scaleX(1.0873)">sureAccess</div>
<div class="t" style="left:538.30px;top:519.62px;font-size:12.3px;font-weight:400;color:#4a4f54;transform:scaleX(1.0231)">v4</div>
<div class="t" style="left:624.68px;top:519.62px;font-size:12.3px;font-weight:400;color:#4a4f54;transform:scaleX(1.1184)">Google Play EMM API Profile</div>
<div class="t" style="left:1248.79px;top:519.62px;font-size:12.3px;font-weight:400;color:#4a4f54;transform:scaleX(1.0129)">Nov 13 2025 11:04:16 AM</div>
<div class="t" style="left:318.98px;top:551.30px;font-size:12.3px;font-weight:400;color:#4a4f54;transform:scaleX(1.1171)">Locked File Explorer</div>
<div class="t" style="left:538.30px;top:551.30px;font-size:12.3px;font-weight:400;color:#4a4f54;transform:scaleX(0.8615)">v1</div>
<div class="t" style="left:625.80px;top:551.30px;font-size:12.3px;font-weight:400;color:#4a4f54;transform:scaleX(1.1565)">Android Patch Profile</div>
<div class="t" style="left:1248.78px;top:551.30px;font-size:12.3px;font-weight:400;color:#4a4f54;transform:scaleX(1.0184)">Nov 12 2025 03:15:59 PM</div>
<div class="t" style="left:320.10px;top:582.98px;font-size:12.3px;font-weight:400;color:#4a4f54;transform:scaleX(1.1731)">whatsapp</div>
<div class="t" style="left:538.30px;top:582.98px;font-size:12.3px;font-weight:400;color:#4a4f54;transform:scaleX(0.8615)">v1</div>
<div class="t" style="left:625.80px;top:582.98px;font-size:12.3px;font-weight:400;color:#4a4f54;transform:scaleX(1.1565)">Android Patch Profile</div>
<div class="t" style="left:1248.74px;top:582.98px;font-size:12.3px;font-weight:400;color:#4a4f54;transform:scaleX(1.0589)">Nov 10 2025 07:09:50 PM</div>
<div class="t" style="left:318.93px;top:614.66px;font-size:12.3px;font-weight:400;color:#4a4f54;transform:scaleX(1.1731)">reset</div>
<div class="t" style="left:538.30px;top:614.66px;font-size:12.3px;font-weight:400;color:#4a4f54;transform:scaleX(0.8615)">v1</div>
<div class="t" style="left:624.68px;top:614.66px;font-size:12.3px;font-weight:400;color:#4a4f54;transform:scaleX(1.1184)">Google Play EMM API Profile</div>
<div class="t" style="left:1248.77px;top:614.66px;font-size:12.3px;font-weight:400;color:#4a4f54;transform:scaleX(1.0348)">Nov 10 2025 03:14:59 PM</div>
<div class="t" style="left:351.68px;top:234.90px;font-size:10.5px;font-weight:700;color:#fff;transform:scaleX(1.2229)">Default</div>
</body></html>
